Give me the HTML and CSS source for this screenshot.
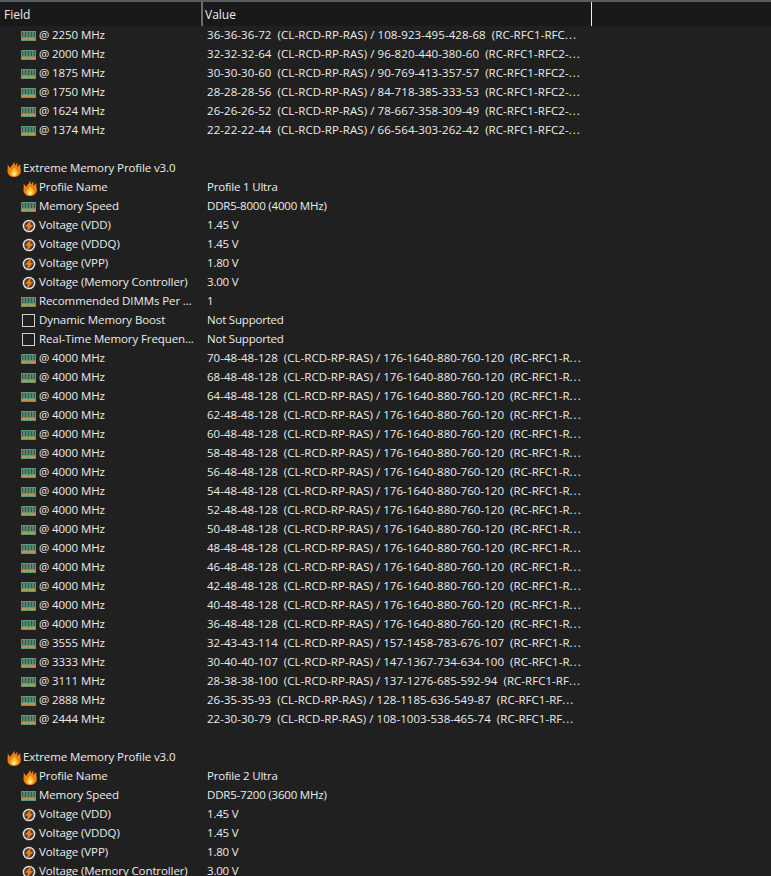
FILE: index.html
```html
<!DOCTYPE html>
<html lang="en">
<head>
<meta charset="utf-8">
<title>Memory profiles</title>
<link rel="stylesheet" href="styles.css">
</head>
<body>
<svg class="defs" width="0" height="0" aria-hidden="true">
  <defs>
    <symbol id="ram" viewBox="0 0 15 10">
      <rect x="0" y="0" width="15" height="10" fill="#5a9a78"/>
      <rect x="1" y="1" width="13" height="5" fill="#35584a"/>
      <path d="M3 1v5M6 1v5M9 1v5M12 1v5" stroke="#7fb096" stroke-width="1"/>
      <rect x="1" y="7" width="6" height="2" fill="#d08f3e"/>
      <rect x="8" y="7" width="6" height="2" fill="#d08f3e"/>
    </symbol>
    <symbol id="fire" viewBox="0 0 14 16">
      <path d="M7 0 8 4.500 10.500 1.500 10.300 6 13.500 3C12.800 5.500 14 7.500 13.800 10.500 13.500 14 10.500 16 7 16 3.500 16 .8 14 .5 10.500.3 8 1.200 6.500.5 3.500L3.500 7C3.800 4.500 7 3.500 7 0Z" fill="#ee7f16"/>
      <path d="M7.500 6C8 8.500 11.300 9.800 10.800 12.300 10.400 14.200 8.800 15.200 7 15.200 5.200 15.200 3.600 14.200 3.600 12.300 3.600 10 6.800 8.800 7.500 6Z" fill="#ffc52e"/>
      <path d="M7.300 10.500C7.600 11.800 8.900 12.300 8.700 13.300 8.400 14.200 7.800 14.500 7 14.500 6.100 14.500 5.500 13.900 5.600 13.100 5.700 12.200 7 11.800 7.300 10.500Z" fill="#fff3b0"/>
    </symbol>
    <symbol id="volt" viewBox="0 0 14 14">
      <circle cx="7" cy="7" r="5.600" fill="#4a403a" stroke="#e4e4e4" stroke-width="1.500"/>
      <path d="M10 0 3 7.700H6L4 14 11.200 5.800H8Z" fill="#f07f1c"/>
    </symbol>
  </defs>
</svg>
<div class="view">
  <div class="header">
    <div class="head-cell head-field">Field</div>
    <div class="head-cell head-value">Value</div>
  </div>
  <div class="rows">
    <div class="row"><div class="field"><svg class="ico"><use href="#ram"/></svg><span>@ 2250 MHz</span></div><div class="value long-a">36-36-36-72  (CL-RCD-RP-RAS) / 108-923-495-428-68  (RC-RFC1-RFC<span class="dots">...</span></div></div>
    <div class="row"><div class="field"><svg class="ico"><use href="#ram"/></svg><span>@ 2000 MHz</span></div><div class="value long-a">32-32-32-64  (CL-RCD-RP-RAS) / 96-820-440-380-60  (RC-RFC1-RFC2-<span class="dots">...</span></div></div>
    <div class="row"><div class="field"><svg class="ico"><use href="#ram"/></svg><span>@ 1875 MHz</span></div><div class="value long-a">30-30-30-60  (CL-RCD-RP-RAS) / 90-769-413-357-57  (RC-RFC1-RFC2-<span class="dots">...</span></div></div>
    <div class="row"><div class="field"><svg class="ico"><use href="#ram"/></svg><span>@ 1750 MHz</span></div><div class="value long-a">28-28-28-56  (CL-RCD-RP-RAS) / 84-718-385-333-53  (RC-RFC1-RFC2-<span class="dots">...</span></div></div>
    <div class="row"><div class="field"><svg class="ico"><use href="#ram"/></svg><span>@ 1624 MHz</span></div><div class="value long-a">26-26-26-52  (CL-RCD-RP-RAS) / 78-667-358-309-49  (RC-RFC1-RFC2-<span class="dots">...</span></div></div>
    <div class="row"><div class="field"><svg class="ico"><use href="#ram"/></svg><span>@ 1374 MHz</span></div><div class="value long-a">22-22-22-44  (CL-RCD-RP-RAS) / 66-564-303-262-42  (RC-RFC1-RFC2-<span class="dots">...</span></div></div>
    <div class="row"></div>
    <div class="row group"><div class="field"><svg class="ico fire"><use href="#fire"/></svg><span>Extreme Memory Profile v3.0</span></div></div>
    <div class="row"><div class="field"><svg class="ico fire"><use href="#fire"/></svg><span>Profile Name</span></div><div class="value">Profile 1 Ultra</div></div>
    <div class="row"><div class="field"><svg class="ico"><use href="#ram"/></svg><span>Memory Speed</span></div><div class="value">DDR5-8000 (4000 MHz)</div></div>
    <div class="row"><div class="field"><svg class="ico volt"><use href="#volt"/></svg><span>Voltage (VDD)</span></div><div class="value">1.45 V</div></div>
    <div class="row"><div class="field"><svg class="ico volt"><use href="#volt"/></svg><span>Voltage (VDDQ)</span></div><div class="value">1.45 V</div></div>
    <div class="row"><div class="field"><svg class="ico volt"><use href="#volt"/></svg><span>Voltage (VPP)</span></div><div class="value">1.80 V</div></div>
    <div class="row"><div class="field"><svg class="ico volt"><use href="#volt"/></svg><span>Voltage (Memory Controller)</span></div><div class="value">3.00 V</div></div>
    <div class="row"><div class="field"><svg class="ico"><use href="#ram"/></svg><span>Recommended DIMMs Per ...</span></div><div class="value">1</div></div>
    <div class="row"><div class="field"><span class="check"></span><span>Dynamic Memory Boost</span></div><div class="value">Not Supported</div></div>
    <div class="row"><div class="field"><span class="check"></span><span>Real-Time Memory Frequen...</span></div><div class="value">Not Supported</div></div>
    <div class="row"><div class="field"><svg class="ico"><use href="#ram"/></svg><span>@ 4000 MHz</span></div><div class="value long-b">70-48-48-128  (CL-RCD-RP-RAS) / 176-1640-880-760-120  (RC-RFC1-R<span class="dots">...</span></div></div>
    <div class="row"><div class="field"><svg class="ico"><use href="#ram"/></svg><span>@ 4000 MHz</span></div><div class="value long-b">68-48-48-128  (CL-RCD-RP-RAS) / 176-1640-880-760-120  (RC-RFC1-R<span class="dots">...</span></div></div>
    <div class="row"><div class="field"><svg class="ico"><use href="#ram"/></svg><span>@ 4000 MHz</span></div><div class="value long-b">64-48-48-128  (CL-RCD-RP-RAS) / 176-1640-880-760-120  (RC-RFC1-R<span class="dots">...</span></div></div>
    <div class="row"><div class="field"><svg class="ico"><use href="#ram"/></svg><span>@ 4000 MHz</span></div><div class="value long-b">62-48-48-128  (CL-RCD-RP-RAS) / 176-1640-880-760-120  (RC-RFC1-R<span class="dots">...</span></div></div>
    <div class="row"><div class="field"><svg class="ico"><use href="#ram"/></svg><span>@ 4000 MHz</span></div><div class="value long-b">60-48-48-128  (CL-RCD-RP-RAS) / 176-1640-880-760-120  (RC-RFC1-R<span class="dots">...</span></div></div>
    <div class="row"><div class="field"><svg class="ico"><use href="#ram"/></svg><span>@ 4000 MHz</span></div><div class="value long-b">58-48-48-128  (CL-RCD-RP-RAS) / 176-1640-880-760-120  (RC-RFC1-R<span class="dots">...</span></div></div>
    <div class="row"><div class="field"><svg class="ico"><use href="#ram"/></svg><span>@ 4000 MHz</span></div><div class="value long-b">56-48-48-128  (CL-RCD-RP-RAS) / 176-1640-880-760-120  (RC-RFC1-R<span class="dots">...</span></div></div>
    <div class="row"><div class="field"><svg class="ico"><use href="#ram"/></svg><span>@ 4000 MHz</span></div><div class="value long-b">54-48-48-128  (CL-RCD-RP-RAS) / 176-1640-880-760-120  (RC-RFC1-R<span class="dots">...</span></div></div>
    <div class="row"><div class="field"><svg class="ico"><use href="#ram"/></svg><span>@ 4000 MHz</span></div><div class="value long-b">52-48-48-128  (CL-RCD-RP-RAS) / 176-1640-880-760-120  (RC-RFC1-R<span class="dots">...</span></div></div>
    <div class="row"><div class="field"><svg class="ico"><use href="#ram"/></svg><span>@ 4000 MHz</span></div><div class="value long-b">50-48-48-128  (CL-RCD-RP-RAS) / 176-1640-880-760-120  (RC-RFC1-R<span class="dots">...</span></div></div>
    <div class="row"><div class="field"><svg class="ico"><use href="#ram"/></svg><span>@ 4000 MHz</span></div><div class="value long-b">48-48-48-128  (CL-RCD-RP-RAS) / 176-1640-880-760-120  (RC-RFC1-R<span class="dots">...</span></div></div>
    <div class="row"><div class="field"><svg class="ico"><use href="#ram"/></svg><span>@ 4000 MHz</span></div><div class="value long-b">46-48-48-128  (CL-RCD-RP-RAS) / 176-1640-880-760-120  (RC-RFC1-R<span class="dots">...</span></div></div>
    <div class="row"><div class="field"><svg class="ico"><use href="#ram"/></svg><span>@ 4000 MHz</span></div><div class="value long-b">42-48-48-128  (CL-RCD-RP-RAS) / 176-1640-880-760-120  (RC-RFC1-R<span class="dots">...</span></div></div>
    <div class="row"><div class="field"><svg class="ico"><use href="#ram"/></svg><span>@ 4000 MHz</span></div><div class="value long-b">40-48-48-128  (CL-RCD-RP-RAS) / 176-1640-880-760-120  (RC-RFC1-R<span class="dots">...</span></div></div>
    <div class="row"><div class="field"><svg class="ico"><use href="#ram"/></svg><span>@ 4000 MHz</span></div><div class="value long-b">36-48-48-128  (CL-RCD-RP-RAS) / 176-1640-880-760-120  (RC-RFC1-R<span class="dots">...</span></div></div>
    <div class="row"><div class="field"><svg class="ico"><use href="#ram"/></svg><span>@ 3555 MHz</span></div><div class="value long-b">32-43-43-114  (CL-RCD-RP-RAS) / 157-1458-783-676-107  (RC-RFC1-R<span class="dots">...</span></div></div>
    <div class="row"><div class="field"><svg class="ico"><use href="#ram"/></svg><span>@ 3333 MHz</span></div><div class="value long-b">30-40-40-107  (CL-RCD-RP-RAS) / 147-1367-734-634-100  (RC-RFC1-R<span class="dots">...</span></div></div>
    <div class="row"><div class="field"><svg class="ico"><use href="#ram"/></svg><span>@ 3111 MHz</span></div><div class="value long-b">28-38-38-100  (CL-RCD-RP-RAS) / 137-1276-685-592-94  (RC-RFC1-RF<span class="dots">...</span></div></div>
    <div class="row"><div class="field"><svg class="ico"><use href="#ram"/></svg><span>@ 2888 MHz</span></div><div class="value long-b">26-35-35-93  (CL-RCD-RP-RAS) / 128-1185-636-549-87  (RC-RFC1-RF<span class="dots">...</span></div></div>
    <div class="row"><div class="field"><svg class="ico"><use href="#ram"/></svg><span>@ 2444 MHz</span></div><div class="value long-b">22-30-30-79  (CL-RCD-RP-RAS) / 108-1003-538-465-74  (RC-RFC1-RF<span class="dots">...</span></div></div>
    <div class="row"></div>
    <div class="row group"><div class="field"><svg class="ico fire"><use href="#fire"/></svg><span>Extreme Memory Profile v3.0</span></div></div>
    <div class="row"><div class="field"><svg class="ico fire"><use href="#fire"/></svg><span>Profile Name</span></div><div class="value">Profile 2 Ultra</div></div>
    <div class="row"><div class="field"><svg class="ico"><use href="#ram"/></svg><span>Memory Speed</span></div><div class="value">DDR5-7200 (3600 MHz)</div></div>
    <div class="row"><div class="field"><svg class="ico volt"><use href="#volt"/></svg><span>Voltage (VDD)</span></div><div class="value">1.45 V</div></div>
    <div class="row"><div class="field"><svg class="ico volt"><use href="#volt"/></svg><span>Voltage (VDDQ)</span></div><div class="value">1.45 V</div></div>
    <div class="row"><div class="field"><svg class="ico volt"><use href="#volt"/></svg><span>Voltage (VPP)</span></div><div class="value">1.80 V</div></div>
    <div class="row"><div class="field"><svg class="ico volt"><use href="#volt"/></svg><span>Voltage (Memory Controller)</span></div><div class="value">3.00 V</div></div>
  </div>
</div>
</body>
</html>
```
FILE: styles.css
```css
html, body {
  margin: 0;
  height: 100%;
  background: #202020;
  overflow: hidden;
}
.defs { display: block; height: 0; }
.view {
  font-family: "Open Sans", "Noto Sans", sans-serif;
  font-size: 11.5px;
  color: #ececec;
  height: 876px;
  overflow: hidden;
}
.header {
  display: flex;
  height: 24px;
  background: #191919;
  border-top: 2px solid #5a5d60;
}
.head-cell {
  display: flex;
  align-items: center;
  box-sizing: border-box;
  font-size: 12px;
}
.head-field { width: 203px; border-right: 2px solid #6e6e6e; padding-left: 4px; }
.head-value { width: 389px; border-right: 1px solid #f0f0f0; padding-left: 2px; }
.row {
  display: flex;
  height: 19px;
  white-space: pre;
}
.field {
  display: flex;
  align-items: center;
  box-sizing: border-box;
  width: 207px;
  padding-left: 21px;
  flex: none;
  letter-spacing: -0.1px;
}
.field span { line-height: 18px; margin-bottom: 1px; }
.group .field { padding-left: 7px; }
.ico {
  width: 15px;
  height: 10px;
  margin-right: 3px;
  flex: none;
}
.ico.fire { width: 14px; height: 16px; margin-right: 2px; }
.row:not(.group) .ico.fire { margin-left: 2px; }
.ico.volt { width: 14px; height: 14px; margin: 0 3px 0 1px; }
.field .check {
  box-sizing: border-box;
  width: 13px;
  height: 13px;
  border: 1px solid #cfcfcf;
  margin: 0 4px 0 1px;
  flex: none;
}
.value {
  flex: none;
  line-height: 18px;
  letter-spacing: -0.2px;
}
.value.long-a { letter-spacing: 0.07px; }
.value.long-b { letter-spacing: 0.04px; }
.dots { letter-spacing: 1px; }
```
